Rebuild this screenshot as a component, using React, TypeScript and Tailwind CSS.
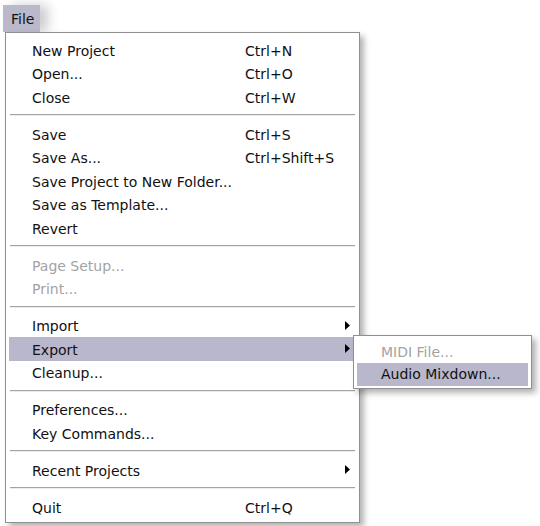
import React from "react";

type Item =
  | { sep: true }
  | { label: string; shortcut?: string; arrow?: boolean; disabled?: boolean; active?: boolean };

const items: Item[] = [
  { label: "New Project", shortcut: "Ctrl+N" },
  { label: "Open...", shortcut: "Ctrl+O" },
  { label: "Close", shortcut: "Ctrl+W" },
  { sep: true },
  { label: "Save", shortcut: "Ctrl+S" },
  { label: "Save As...", shortcut: "Ctrl+Shift+S" },
  { label: "Save Project to New Folder..." },
  { label: "Save as Template..." },
  { label: "Revert" },
  { sep: true },
  { label: "Page Setup...", disabled: true },
  { label: "Print...", disabled: true },
  { sep: true },
  { label: "Import", arrow: true },
  { label: "Export", arrow: true, active: true },
  { label: "Cleanup..." },
  { sep: true },
  { label: "Preferences..." },
  { label: "Key Commands..." },
  { sep: true },
  { label: "Recent Projects", arrow: true },
  { sep: true },
  { label: "Quit", shortcut: "Ctrl+Q" },
];

function Arrow() {
  return (
    <svg width="5" height="9" viewBox="0 0 5 9" className="block">
      <polygon points="0,0 5,4.5 0,9" fill="#000" />
    </svg>
  );
}

export default function App() {
  return (
    <div
      className="relative w-[540px] h-[526px] bg-white overflow-hidden text-[14px] text-[#111]"
      style={{ fontFamily: '"DejaVu Sans", Verdana, sans-serif' }}
    >
      <div className="pl-[3px] pt-[5px]">
        <div className="w-[37px] h-[27px] bg-[#bab8cb] flex items-center pl-[8px] pt-[2px] shadow-[8px_0_12px_rgba(0,0,0,0.2)]">
          File
        </div>
      </div>

      <div className="relative ml-[5px] w-[355px] border border-[#8f8f8f] bg-white pt-[5px] pb-[3px] px-[3px] shadow-[4px_4px_6px_rgba(0,0,0,0.3)]">
        {items.map((it, i) =>
          "sep" in it ? (
            <div key={i} className="h-[13.5px] flex items-center px-[1px]">
              <div className="w-full h-[2px] border-t border-[#a3a3a3] border-b border-b-[#ececec]" />
            </div>
          ) : (
            <div
              key={i}
              className={
                "h-[23.5px] flex items-center pt-[3px] pl-[23px] pr-[6px] " +
                (it.active ? "bg-[#b9b7cb] " : "") +
                (it.disabled ? "text-[#a3a3a3]" : "")
              }
            >
              <span className="w-[213px] whitespace-nowrap">{it.label}</span>
              {it.shortcut && <span className="whitespace-nowrap">{it.shortcut}</span>}
              {it.arrow && (
                <span className="ml-auto -mt-[3px]">
                  <Arrow />
                </span>
              )}
            </div>
          )
        )}
      </div>

      <div className="absolute left-[353px] top-[335px] w-[179px] border border-[#8f8f8f] bg-white pt-[3px] pb-[2px] px-[3px] shadow-[4px_4px_6px_rgba(0,0,0,0.3)]">
        <div className="h-[23.5px] flex items-center pt-[3px] pl-[24px] text-[#a3a3a3] whitespace-nowrap">
          MIDI File...
        </div>
        <div className="h-[23px] flex items-center pl-[24px] bg-[#b9b7cb] whitespace-nowrap">
          Audio Mixdown...
        </div>
      </div>
    </div>
  );
}
